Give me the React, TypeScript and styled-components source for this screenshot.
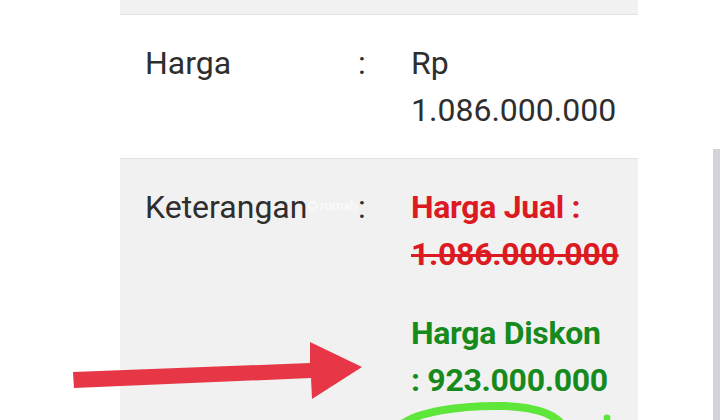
import styled, { createGlobalStyle } from 'styled-components'

const GlobalStyle = createGlobalStyle`
  html, body {
    margin: 0;
    padding: 0;
    background: #ffffff;
    overflow: hidden;
  }
  body {
    font-family: Roboto, "Noto Sans", Arial, sans-serif;
  }
`

const Page = styled.div`
  position: relative;
  width: 720px;
  height: 420px;
  overflow: hidden;
  background: #ffffff;
`

const Table = styled.div`
  margin-left: 120px;
  width: 518px;
  display: flex;
  flex-direction: column;
`

const Row = styled.div<{ $shade?: boolean; $top?: boolean }>`
  display: grid;
  grid-template-columns: 238px 53px 1fr;
  padding: ${(p) => (p.$top ? '0' : '25px 0 24px')};
  height: ${(p) => (p.$top ? '14px' : 'auto')};
  background: ${(p) => (p.$shade ? '#f1f1f1' : '#ffffff')};
  border-bottom: 1px solid #e2e2e2;
  font-size: 32px;
  line-height: 47px;
  color: #2e2e2e;
`

const Label = styled.div`
  padding-left: 25px;
`

const Colon = styled.div``

const Value = styled.div``

const Note = styled.div<{ $tone: 'red' | 'green'; $gap?: number }>`
  font-weight: 700;
  color: ${(p) => (p.$tone === 'red' ? '#dc1a22' : '#168a1c')};
  margin-top: ${(p) => p.$gap ?? 0}px;
  letter-spacing: -0.3px;
`

const Struck = styled.span`
  text-decoration: line-through;
  text-decoration-thickness: 3px;
`

const Watermark = styled.div`
  position: absolute;
  left: 308px;
  top: 198px;
  display: flex;
  align-items: center;
  gap: 2px;
  font-size: 13px;
  font-weight: 700;
  color: #ffffff;
  opacity: 0.6;
  pointer-events: none;
`

const WatermarkDot = styled.span`
  width: 10px;
  height: 10px;
  border-radius: 50%;
  border: 2px solid #ffffff;
  box-sizing: border-box;
`

const Scrollbar = styled.div`
  position: absolute;
  right: 0;
  top: 149px;
  width: 7px;
  bottom: 0;
  background: #d2d4d7;
`

const Annotation = styled.svg`
  position: absolute;
  left: 0;
  top: 0;
  pointer-events: none;
`

export default function App() {
  return (
    <Page>
      <GlobalStyle />
      <Table>
        <Row $shade $top />
        <Row>
          <Label>Harga</Label>
          <Colon>:</Colon>
          <Value>
            Rp
            <br />
            1.086.000.000
          </Value>
        </Row>
        <Row $shade>
          <Label>Keterangan</Label>
          <Colon>:</Colon>
          <Value>
            <Note $tone="red">
              Harga Jual :
              <br />
              <Struck>1.086.000.000</Struck>
            </Note>
            <Note $tone="green" $gap={32}>
              Harga Diskon
              <br />: 923.000.000
            </Note>
          </Value>
        </Row>
      </Table>
      <Watermark>
        <WatermarkDot />
        rumah
      </Watermark>
      <Scrollbar />
      <Annotation width="720" height="420" viewBox="0 0 720 420">
        <polygon
          points="73,372 310,363 310,342 362,367 312,399 311,378 74,388"
          fill="#e73646"
        />
        <path
          d="M400 426 C 415 412, 460 405, 505 406 C 530 407, 550 412, 560 422"
          fill="none"
          stroke="#5ee63a"
          strokeWidth="8"
          strokeLinecap="round"
        />
        <circle cx="607" cy="418" r="3.5" fill="#5ee63a" />
      </Annotation>
    </Page>
  )
}
